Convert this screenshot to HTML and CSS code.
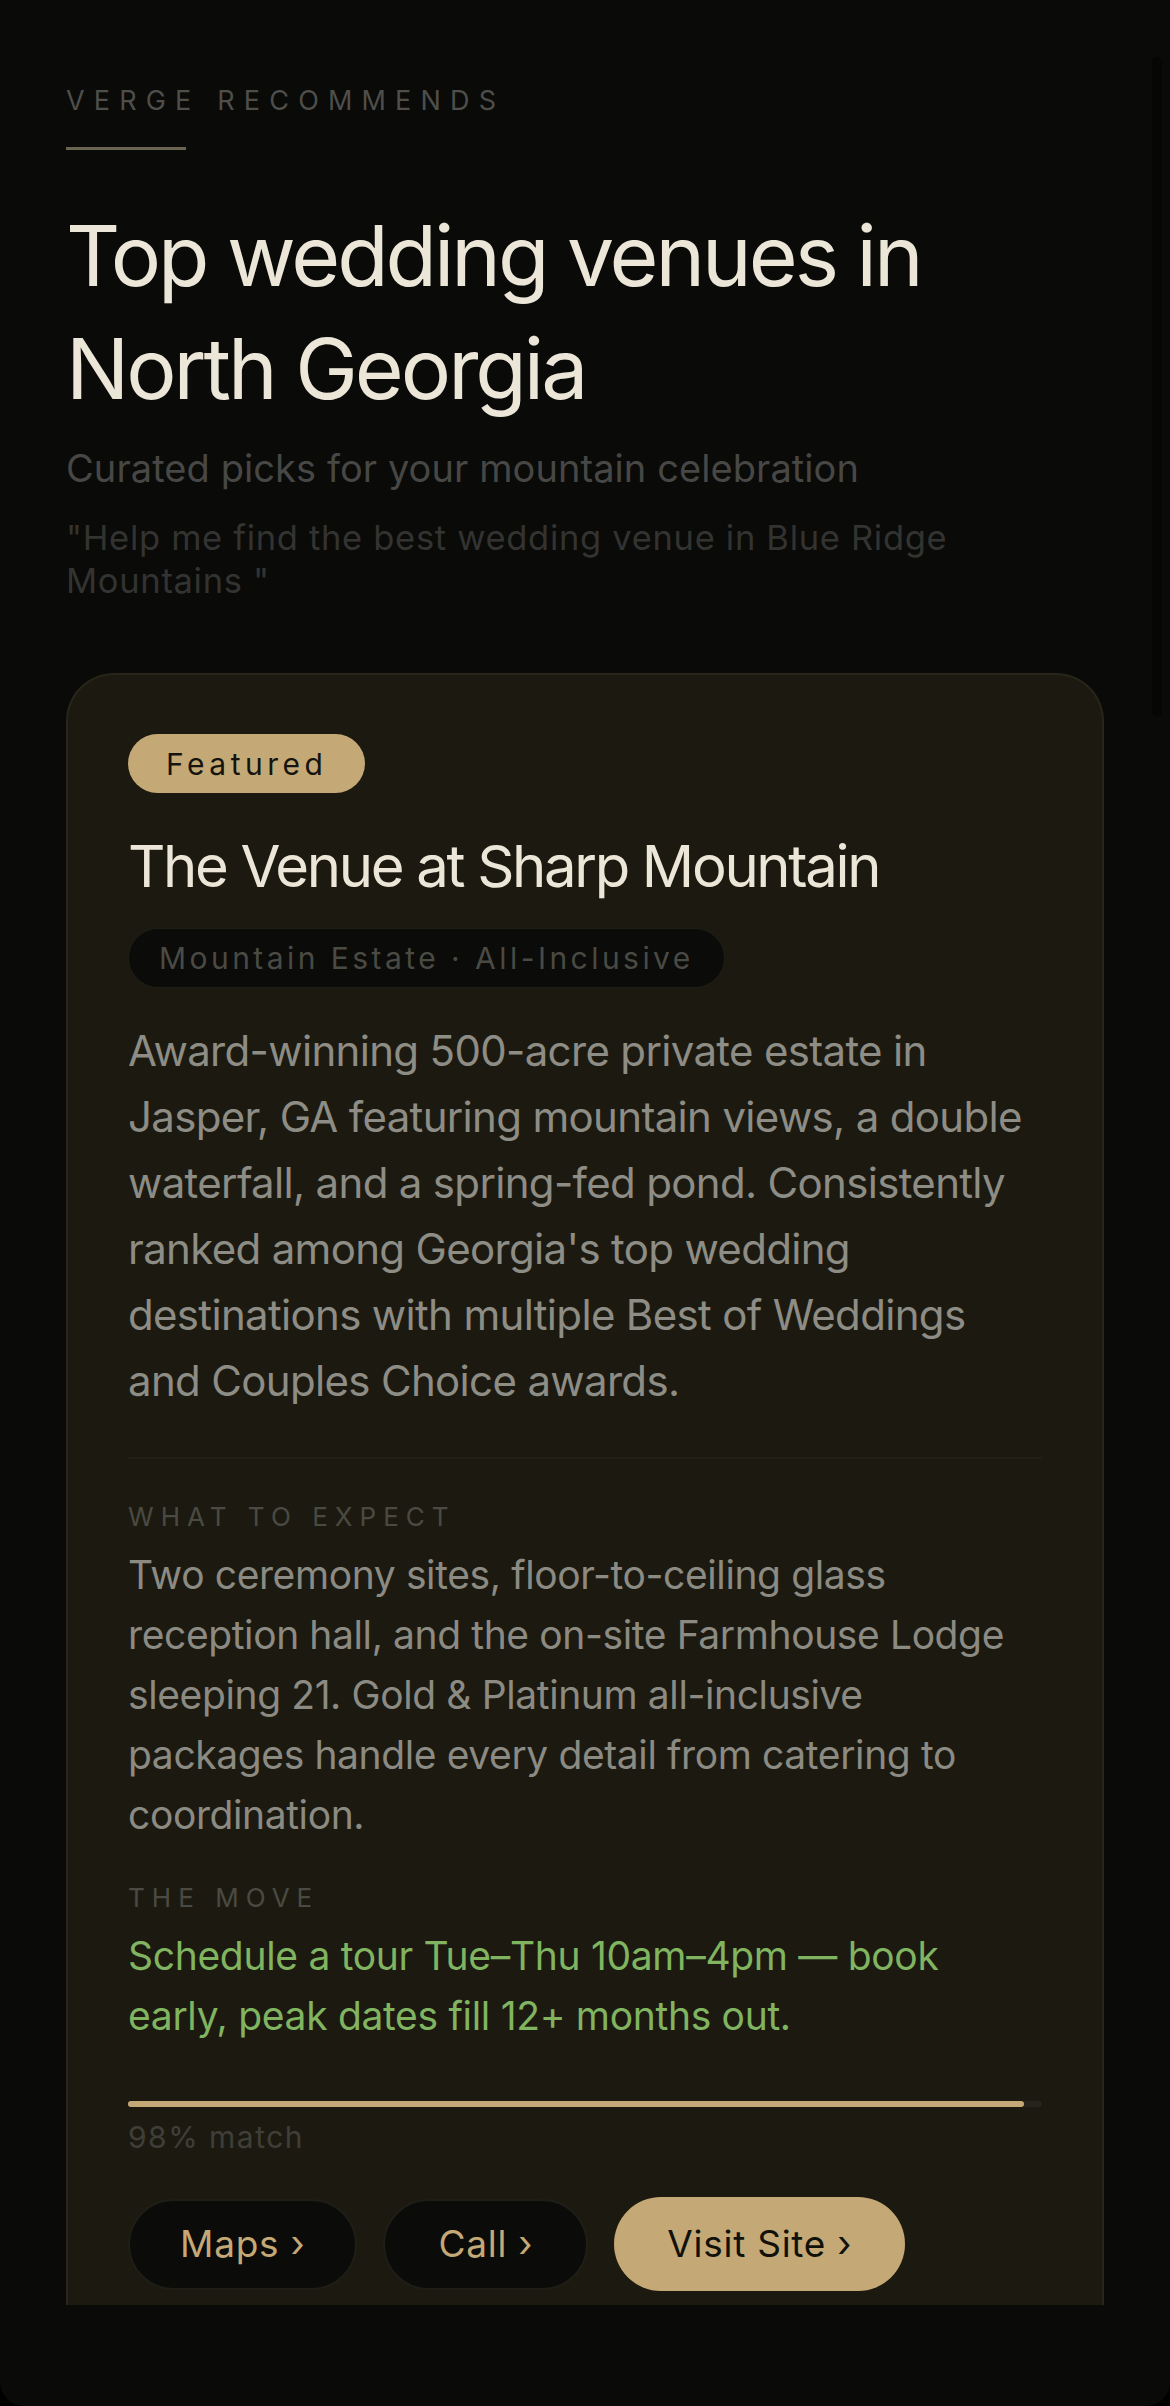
FILE: index.html
```html
<!DOCTYPE html>
<html lang="en">
<head>
<meta charset="utf-8">
<title>Verge Recommends</title>
<link rel="stylesheet" href="styles.css">
</head>
<body>
<main class="screen">
  <div class="scroll-thumb" aria-hidden="true"></div>
  <header class="intro">
    <p class="eyebrow">VERGE RECOMMENDS</p>
    <div class="eyebrow-rule"></div>
    <h1 class="headline">Top wedding venues in North Georgia</h1>
    <p class="subhead">Curated picks for your mountain celebration</p>
    <p class="query">"Help me find the best wedding venue in Blue Ridge Mountains "</p>
  </header>

  <article class="card">
    <span class="badge">Featured</span>
    <h2 class="venue">The Venue at Sharp Mountain</h2>
    <span class="tag">Mountain Estate · All-Inclusive</span>
    <p class="desc">Award-winning 500-acre private estate in Jasper, GA featuring mountain views, a double waterfall, and a spring-fed pond. Consistently ranked among Georgia's top wedding destinations with multiple Best of Weddings and Couples Choice awards.</p>
    <div class="divider"></div>
    <h3 class="label label-expect">WHAT TO EXPECT</h3>
    <p class="body">Two ceremony sites, floor-to-ceiling glass reception hall, and the on-site Farmhouse Lodge sleeping 21. Gold &amp; Platinum all-inclusive packages handle every detail from catering to coordination.</p>
    <h3 class="label label-move">THE MOVE</h3>
    <p class="move">Schedule a tour Tue–Thu 10am–4pm — book early, peak dates fill 12+ months out.</p>
    <div class="meter"><div class="meter-fill" style="width: 98%"></div></div>
    <p class="match">98% match</p>
    <div class="actions">
      <a class="btn btn-dark" href="#">Maps ›</a>
      <a class="btn btn-dark btn-call" href="#">Call ›</a>
      <a class="btn btn-gold" href="#">Visit Site ›</a>
    </div>
  </article>
</main>
</body>
</html>
```

FILE: styles.css
```css
* { box-sizing: border-box; }

html, body {
  margin: 0;
  padding: 0;
  background: #000;
}

body {
  font-family: Inter, "Noto Sans", "Liberation Sans", sans-serif;
  -webkit-font-smoothing: antialiased;
}

.screen {
  position: relative;
  width: 1170px;
  height: 2406px;
  background: #0a0a08;
  border-radius: 0 0 24px 24px;
  overflow: hidden;
  padding: 85px 66px 0 66px;
}

.scroll-thumb {
  position: absolute;
  top: 57px;
  left: 1152px;
  width: 10px;
  height: 660px;
  border-radius: 5px;
  background: #060605;
}

.intro {
  display: flex;
  flex-direction: column;
}

.eyebrow {
  margin: 0;
  font-size: 27px;
  line-height: 32px;
  letter-spacing: 0.34em;
  color: #4e4e4b;
  font-weight: 400;
}

.eyebrow-rule {
  margin-top: 30px;
  width: 120px;
  height: 3px;
  background: #6b6450;
}

.headline {
  margin: 49px 0 0 0;
  font-size: 84px;
  line-height: 113px;
  font-weight: 400;
  letter-spacing: -0.036em;
  color: #ebe6d8;
  max-width: 980px;
}

.subhead {
  margin: 20px 0 0 0;
  font-size: 38px;
  line-height: 47px;
  color: #474745;
  letter-spacing: 0.002em;
}

.query {
  margin: 24px 0 0 0;
  font-size: 34.5px;
  line-height: 43px;
  color: #333331;
  letter-spacing: 0.02em;
  max-width: 960px;
}

.card {
  margin-top: 71px;
  background: #1c1a10;
  border: 2px solid #28261a;
  border-bottom: none;
  border-radius: 48px 48px 0 0;
  padding: 59px 60px 14px 60px;
  display: flex;
  flex-direction: column;
  align-items: flex-start;
}

.badge {
  display: inline-block;
  background: #c4a977;
  color: #15140e;
  font-size: 30px;
  line-height: 36px;
  padding: 11.5px 38px;
  border-radius: 30px;
  letter-spacing: 0.15em;
}

.venue {
  margin: 38px 0 0 0;
  font-size: 58px;
  line-height: 70px;
  font-weight: 400;
  letter-spacing: -0.04em;
  color: #ebe6d8;
}

.tag {
  margin-top: 27px;
  display: inline-block;
  background: #0b0b09;
  border: 1px solid #1f1e16;
  border-radius: 30px;
  padding: 11px 30px;
  font-size: 30px;
  line-height: 36px;
  letter-spacing: 0.115em;
  color: #4a4a44;
}

.desc {
  margin: 30px 0 0 0;
  font-size: 42px;
  line-height: 66px;
  color: #8d8c85;
  letter-spacing: -0.016em;
}

.divider {
  margin-top: 43px;
  align-self: stretch;
  height: 2px;
  background: #222015;
}

.label {
  margin: 0;
  font-size: 26px;
  line-height: 32px;
  font-weight: 400;
  letter-spacing: 0.27em;
  color: #4a4a42;
}

.label-expect { margin-top: 42px; }
.label-move { margin-top: 37px; }

.body {
  margin: 12px 0 0 0;
  font-size: 39px;
  line-height: 60px;
  color: #8b8a83;
  letter-spacing: -0.01em;
}

.move {
  margin: 12px 0 0 0;
  font-size: 39px;
  line-height: 60px;
  color: #80b460;
  letter-spacing: -0.008em;
}

.meter {
  margin-top: 55px;
  align-self: stretch;
  height: 6px;
  border-radius: 3px;
  background: #25241d;
}

.meter-fill {
  height: 100%;
  border-radius: 3px;
  background: #c4a977;
}

.match {
  margin: 12px 0 0 0;
  font-size: 30px;
  line-height: 36px;
  color: #3f3f39;
  letter-spacing: 0.05em;
}

.actions {
  margin-top: 42px;
  display: flex;
  align-items: center;
  gap: 26px;
}

.btn {
  display: inline-block;
  text-decoration: none;
  font-size: 37px;
  line-height: 44px;
  border-radius: 48px;
  letter-spacing: 0.02em;
}

.btn-dark {
  background: #0b0b09;
  color: #c4a977;
  border: 2px solid #1f1e16;
  padding: 21.5px 50px;
}

.btn-call {
  padding-left: 53px;
  padding-right: 53px;
}

.btn-gold {
  background: #c4a977;
  color: #111109;
  padding: 25px 53px;
}
```
